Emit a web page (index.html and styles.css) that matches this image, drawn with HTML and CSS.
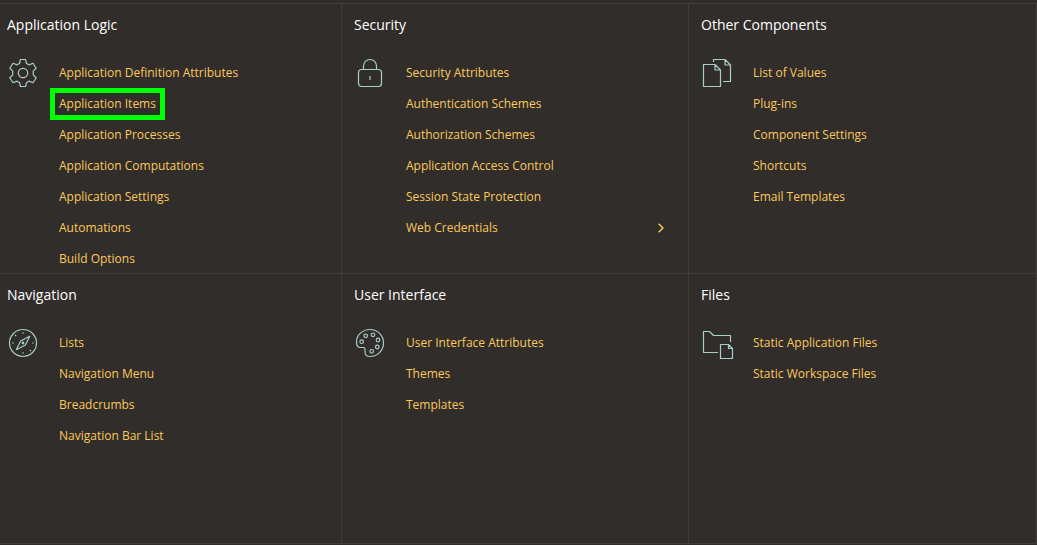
FILE: index.html
```html
<!DOCTYPE html>
<html lang="en">
<head>
<meta charset="utf-8">
<meta name="viewport" content="width=device-width, initial-scale=1">
<title>Shared Components</title>
<link rel="stylesheet" href="styles.css">
</head>
<body>
<main class="components">
  <section class="group">
    <h2 class="group-title">Application Logic</h2>
    <div class="group-body">
      <svg class="icon" viewBox="0 0 28 28" aria-hidden="true"><path d="M11.4.5h5.2l.9 4q1.2.4 2.4 1.4L24 4.3l3.2 5-3 2.8q.3 1.9 0 3.8l3 2.8-3.2 5-4.1-1.6q-1.2 1-2.4 1.4l-.9 4h-5.2l-.9-4q-1.2-.4-2.4-1.4L4 23.700l-3.200-5 3-2.800q-.3-1.900 0-3.800l-3-2.800 3.200-5 4.100 1.600q1.200-1 2.400-1.400z"/><circle cx="14" cy="14" r="4.700"/></svg>
      <ul class="links">
        <li><a href="#">Application Definition Attributes</a></li>
        <li><a href="#" class="highlighted">Application Items</a></li>
        <li><a href="#">Application Processes</a></li>
        <li><a href="#">Application Computations</a></li>
        <li><a href="#">Application Settings</a></li>
        <li><a href="#">Automations</a></li>
        <li><a href="#">Build Options</a></li>
      </ul>
    </div>
  </section>
  <section class="group">
    <h2 class="group-title">Security</h2>
    <div class="group-body">
      <svg class="icon" viewBox="0 0 28 28" aria-hidden="true"><rect x="2.500" y="10.500" width="23" height="17" rx="3"/><path d="M7.500 10.500V7a6.500 6.500 0 0 1 13 0v3.500M14 17v4"/></svg>
      <ul class="links">
        <li><a href="#">Security Attributes</a></li>
        <li><a href="#">Authentication Schemes</a></li>
        <li><a href="#">Authorization Schemes</a></li>
        <li><a href="#">Application Access Control</a></li>
        <li><a href="#">Session State Protection</a></li>
        <li><a href="#" class="with-arrow">Web Credentials<svg class="arrow" viewBox="0 0 6 10" aria-hidden="true"><path d="M.7.7 5 5 .7 9.300"/></svg></a></li>
      </ul>
    </div>
  </section>
  <section class="group">
    <h2 class="group-title">Other Components</h2>
    <div class="group-body">
      <svg class="icon" viewBox="0 0 28 28" aria-hidden="true"><path d="M.5 5.500h11.500l5.500 5.500v16.500H.5zM12 5.500V11h5.500M10.500 3V.5h11.500l5.500 5.500v16.500H20M22 .5V6h5.500"/></svg>
      <ul class="links">
        <li><a href="#">List of Values</a></li>
        <li><a href="#">Plug-ins</a></li>
        <li><a href="#">Component Settings</a></li>
        <li><a href="#">Shortcuts</a></li>
        <li><a href="#">Email Templates</a></li>
      </ul>
    </div>
  </section>
  <section class="group">
    <h2 class="group-title">Navigation</h2>
    <div class="group-body">
      <svg class="icon" viewBox="0 0 28 28" aria-hidden="true"><circle cx="14" cy="14" r="13.500"/><path d="M20.700 7.300 11.600 12 7.300 20.700 16.400 16zM14 3.200v1.600M14 23.200v1.600M3.200 14h1.600M23.200 14h1.600M6 6l1.200 1.200M20.800 20.800l1.200 1.200"/><circle cx="14" cy="14" r=".8"/></svg>
      <ul class="links">
        <li><a href="#">Lists</a></li>
        <li><a href="#">Navigation Menu</a></li>
        <li><a href="#">Breadcrumbs</a></li>
        <li><a href="#">Navigation Bar List</a></li>
      </ul>
    </div>
  </section>
  <section class="group">
    <h2 class="group-title">User Interface</h2>
    <div class="group-body">
      <svg class="icon" viewBox="0 0 28 28" aria-hidden="true"><path d="M14 .5C6.500.5.5 6 .5 13c0 3.500 1.500 5.500 3.700 5.500h3.300q1.500 0 1.500 1.500v3c0 2.700 2 4.500 5 4.500 7.500 0 13.500-6 13.500-13.500S21.500.5 14 .5z"/><circle cx="5.700" cy="12.700" r="1.800"/><circle cx="9.700" cy="6.800" r="1.800"/><circle cx="17" cy="5.800" r="1.800"/><circle cx="22" cy="11" r="1.800"/><circle cx="21.300" cy="18" r="1.800"/><circle cx="15.700" cy="22.300" r="1.800"/></svg>
      <ul class="links">
        <li><a href="#">User Interface Attributes</a></li>
        <li><a href="#">Themes</a></li>
        <li><a href="#">Templates</a></li>
      </ul>
    </div>
  </section>
  <section class="group">
    <h2 class="group-title">Files</h2>
    <div class="group-body">
      <svg class="icon" viewBox="0 0 28 28" aria-hidden="true"><path d="M15 23.500H.5v-21h6l4 4h17V13M17.500 15.500h8l4 4v10h-12zM25.500 15.500v4h4"/></svg>
      <ul class="links">
        <li><a href="#">Static Application Files</a></li>
        <li><a href="#">Static Workspace Files</a></li>
      </ul>
    </div>
  </section>
</main>
</body>
</html>
```
FILE: styles.css
```css
* {
  box-sizing: border-box;
}

body {
  margin: 0;
  background: #312d2a;
  color: #fff;
  font-family: "Open Sans", "Noto Sans", sans-serif;
  font-size: 12px;
}

.components {
  display: grid;
  grid-template-columns: 342fr 347fr 348fr;
  grid-auto-rows: 1fr;
  min-height: 100vh;
  padding: 4px 0 1px;
}

.group {
  padding: 11px 24px 0 12px;
  border-right: 1px solid #413d3a;
  border-bottom: 1px solid #413d3a;
  box-shadow: 0 -1px #413d3a;
}

.group:nth-child(3n + 1) {
  padding-left: 7px;
}

.group-title {
  margin: 0 0 24px;
  font-size: 14px;
  font-weight: 400;
  line-height: 20px;
}

.group-body {
  display: flex;
  gap: 20px;
}

.icon {
  flex: none;
  width: 28px;
  height: 28px;
  margin: 0 2px;
  overflow: visible;
  fill: none;
  stroke: #a9cdc8;
  stroke-linejoin: round;
  stroke-width: 1.2;
}

.links {
  display: grid;
  flex: 1;
  align-content: start;
  gap: 3px;
  margin: 0;
  padding: 0;
  line-height: 28px;
  list-style: none;
}

.links a {
  color: #fbc95c;
  text-decoration: none;
}

.links .highlighted {
  position: relative;
  display: inline-block;
}

.highlighted::after {
  position: absolute;
  inset: -2px -9px;
  border: 5px solid #0f0;
  content: "";
}

.links .with-arrow {
  display: flex;
  align-items: center;
  justify-content: space-between;
}

.arrow {
  width: 6px;
  height: 10px;
  fill: none;
  stroke: #fbc95c;
  stroke-width: 1.5;
}
```
